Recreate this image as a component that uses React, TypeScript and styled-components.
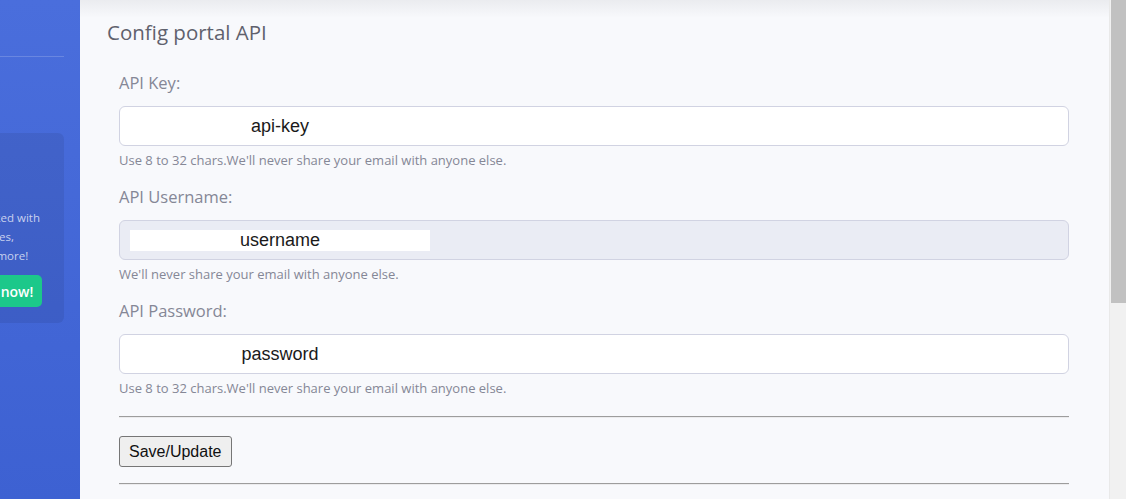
import React from "react";
import styled, { createGlobalStyle } from "styled-components";

const GlobalStyle = createGlobalStyle`
  html, body {
    margin: 0;
    padding: 0;
    height: 499px;
    overflow: hidden;
    background: #f8f9fc;
  }
  * {
    box-sizing: border-box;
  }
`;

const baseFont = `"Open Sans", "Lato", "Noto Sans", sans-serif`;

interface Field {
  label: string;
  value: string;
  help: string;
  readOnly?: boolean;
}

const fields: Field[] = [
  {
    label: "API Key:",
    value: "api-key",
    help: "Use 8 to 32 chars.We'll never share your email with anyone else.",
  },
  {
    label: "API Username:",
    value: "username",
    help: "We'll never share your email with anyone else.",
    readOnly: true,
  },
  {
    label: "API Password:",
    value: "password",
    help: "Use 8 to 32 chars.We'll never share your email with anyone else.",
  },
];

const App = () => {
  return (
    <>
      <GlobalStyle />
      <Page>
        <Sidebar>
          <SidebarInner>
            <SidebarDivider />
            <SidebarCard>
              <CardIllustration />
              <CardText>
                <span>SB Admin Pro is packed with</span>
                <span>premium features,</span>
                <span>components, and more!</span>
              </CardText>
              <UpgradeButton>Upgrade to Pro now!</UpgradeButton>
            </SidebarCard>
          </SidebarInner>
        </Sidebar>

        <Main>
          <TopShadow />
          <Title>Config portal API</Title>
          <Form>
            {fields.map((f) => (
              <Group key={f.label}>
                <Label>{f.label}</Label>
                <Input $readOnly={f.readOnly}>
                  <InputValue>{f.value}</InputValue>
                </Input>
                <Help>{f.help}</Help>
              </Group>
            ))}
            <Divider />
            <SaveButton>Save/Update</SaveButton>
            <Divider />
          </Form>
        </Main>

        <ScrollTrack>
          <ScrollThumb />
        </ScrollTrack>
      </Page>
    </>
  );
};

const Page = styled.div`
  display: flex;
  height: 499px;
  width: 1126px;
  overflow: hidden;
  font-family: ${baseFont};
`;

/* sidebar is scrolled sideways, only its right edge is visible */
const Sidebar = styled.div`
  flex: 0 0 80px;
  overflow: hidden;
  background: linear-gradient(180deg, #4a6edc 0%, #3d61d2 100%);
`;

const SidebarInner = styled.div`
  width: 224px;
  margin-left: -144px;
  padding-top: 56px;
`;

const SidebarDivider = styled.div`
  margin: 0 16px;
  border-top: 1px solid rgba(255, 255, 255, 0.18);
`;

const SidebarCard = styled.div`
  margin: 76px 16px 0;
  padding: 16px;
  border-radius: 6px;
  background: rgba(0, 0, 0, 0.07);
  display: flex;
  flex-direction: column;
  align-items: center;
`;

const CardIllustration = styled.div`
  height: 48px;
  margin-bottom: 11px;
`;

const CardText = styled.p`
  margin: 0 8px 10px 0;
  display: flex;
  flex-direction: column;
  align-items: center;
  font-size: 11.5px;
  line-height: 19px;
  color: rgba(255, 255, 255, 0.72);
  white-space: nowrap;
`;

const UpgradeButton = styled.button`
  height: 32px;
  padding: 0 9px;
  margin-right: 8px;
  border: 0;
  border-radius: 5px;
  background: #1cc88a;
  color: #fff;
  font-family: ${baseFont};
  font-size: 14px;
  font-weight: 600;
  white-space: nowrap;
`;

const Main = styled.div`
  flex: 1;
  position: relative;
  background: #f8f9fc;
  padding: 20px 28px 0 27px;
`;

const TopShadow = styled.div`
  position: absolute;
  top: 0;
  left: 0;
  right: 0;
  height: 18px;
  background: linear-gradient(180deg, rgba(58, 59, 69, 0.07), rgba(58, 59, 69, 0));
`;

const Title = styled.h5`
  margin: 0 0 27px;
  font-size: 20.5px;
  line-height: 24px;
  font-weight: 400;
  color: #5f616d;
`;

const Form = styled.div`
  padding: 0 12px;
  display: flex;
  flex-direction: column;
  align-items: flex-start;
`;

const Group = styled.div`
  align-self: stretch;
  margin-bottom: 15px;
`;

const Label = styled.label`
  display: block;
  margin-bottom: 11px;
  font-size: 16.5px;
  line-height: 24px;
  color: #858796;
`;

const Input = styled.div<{ $readOnly?: boolean }>`
  height: 40px;
  padding: 8.5px 10px;
  border: 1px solid #d1d3e2;
  border-radius: 6px;
  background: ${({ $readOnly }) => ($readOnly ? "#eaecf4" : "#fff")};
`;

const InputValue = styled.span`
  display: block;
  width: 300px;
  height: 21px;
  background: #fff;
  text-align: center;
  font-family: "Liberation Sans", Arial, sans-serif;
  font-size: 18px;
  line-height: 21px;
  color: #1a1a1a;
`;

const Help = styled.small`
  display: block;
  margin-top: 5px;
  font-size: 13px;
  line-height: 19px;
  color: #858796;
`;

const Divider = styled.hr`
  align-self: stretch;
  margin: 3px 0 18px;
  height: 0;
  border: 0;
  border-top: 1px solid #9d9d9d;
  border-bottom: 1px solid #ececee;

  & + button + & {
    margin-top: 16px;
  }
`;

const SaveButton = styled.button`
  height: 31px;
  padding: 0 9px;
  border: 1px solid #767676;
  border-radius: 3px;
  background: #efefef;
  color: #111;
  font-family: "Liberation Sans", Arial, sans-serif;
  font-size: 16px;
`;

const ScrollTrack = styled.div`
  flex: 0 0 17px;
  background: #f1f1f1;
  border-left: 1px solid #e9e9e9;
  padding-left: 1px;
`;

const ScrollThumb = styled.div`
  height: 303px;
  background: #c1c1c1;
`;

export default App;
